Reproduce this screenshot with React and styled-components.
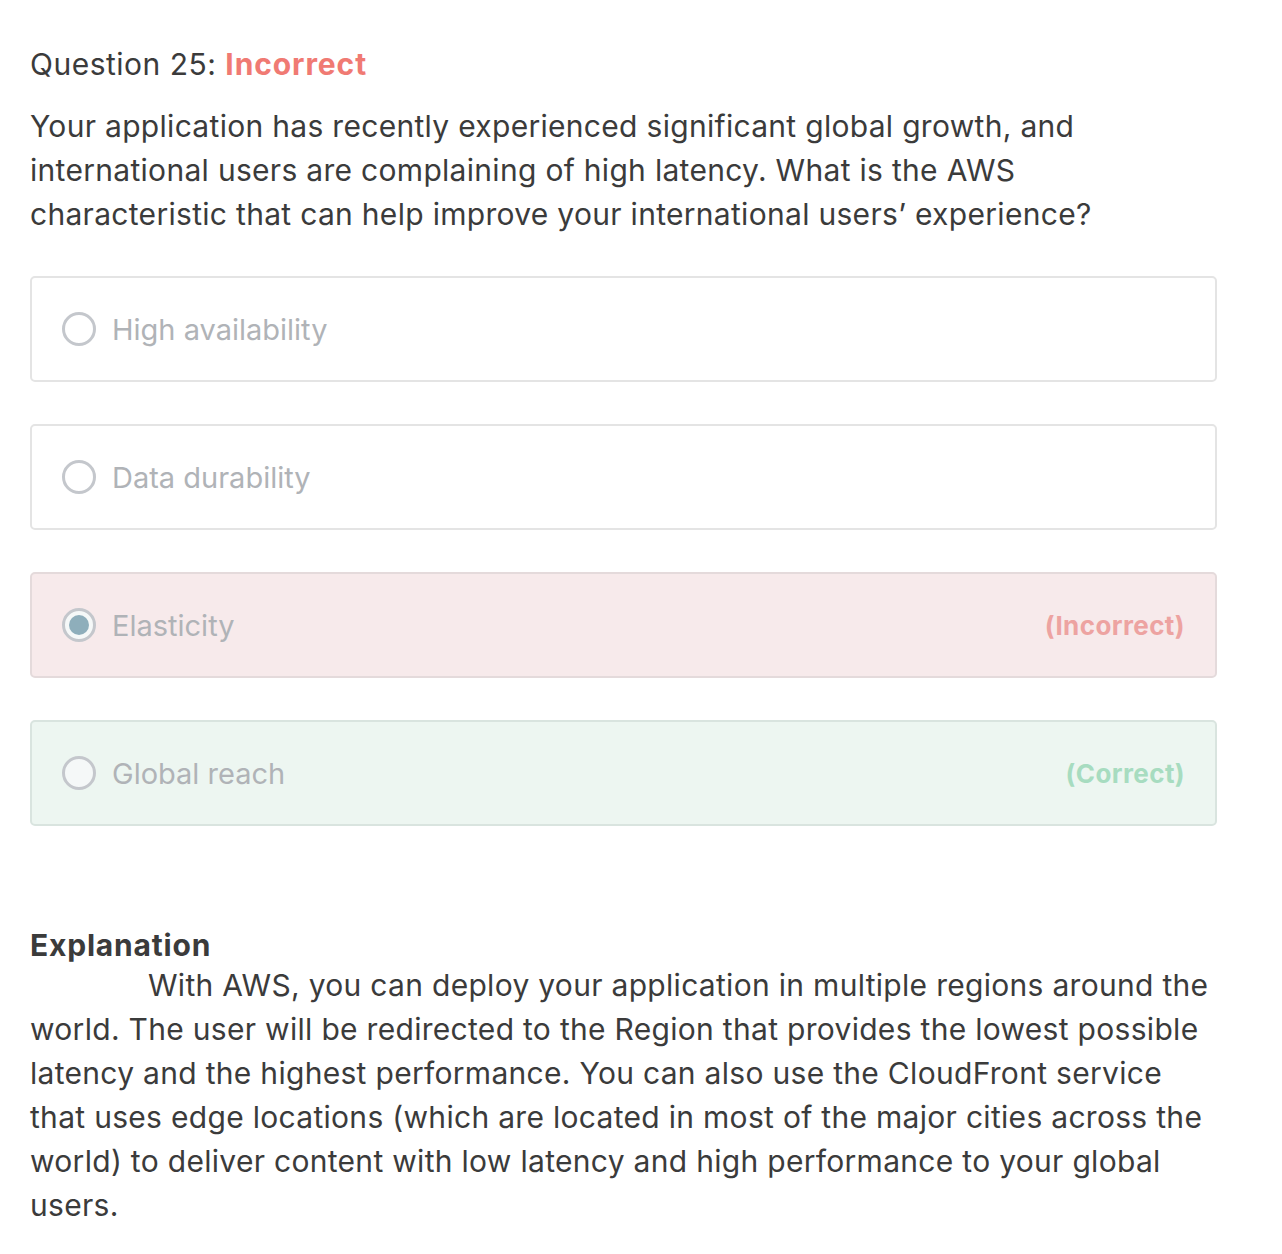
import styled, { createGlobalStyle } from "styled-components";

const GlobalStyle = createGlobalStyle`
  body {
    margin: 0;
    background: #ffffff;
    font-family: Inter, "Noto Sans", sans-serif;
    color: #3b3b3b;
  }
`;

const Page = styled.div`
  padding: 44px 30px 30px 30px;
  width: 1187px;
`;

const Heading = styled.div`
  font-size: 30px;
  line-height: 40px;
  letter-spacing: 0.5px;
  margin-bottom: 20px;
`;

const Status = styled.span`
  color: #f07a73;
  font-weight: 700;
  letter-spacing: 0.9px;
`;

const Prompt = styled.p`
  margin: 0 0 40px 0;
  font-size: 30px;
  line-height: 44px;
  letter-spacing: 0.3px;
`;

const Options = styled.div`
  display: flex;
  flex-direction: column;
  gap: 42px;
`;

const tones = {
  plain: { bg: "#ffffff", border: "#e4e4e4", label: "transparent" },
  wrong: { bg: "#f7eaeb", border: "#e4dadb", label: "#eda3a1" },
  right: { bg: "#edf6f1", border: "#d9e4df", label: "#a7dcc0" },
};

const Option = styled.div`
  display: flex;
  align-items: center;
  height: 106px;
  box-sizing: border-box;
  padding: 0 30px 0 30px;
  border: 2px solid ${(p) => tones[p.$tone].border};
  border-radius: 5px;
  background: ${(p) => tones[p.$tone].bg};
`;

const Radio = styled.span`
  width: 34px;
  height: 34px;
  box-sizing: border-box;
  border-radius: 50%;
  border: 3px solid #c4c7cc;
  background: ${(p) => (p.$tone === "plain" ? "#ffffff" : "#f5f8f8")};
  display: flex;
  align-items: center;
  justify-content: center;
  flex-shrink: 0;
  &::after {
    content: "";
    display: ${(p) => (p.$checked ? "block" : "none")};
    width: 20px;
    height: 20px;
    border-radius: 50%;
    background: #8eaebb;
  }
`;

const OptionText = styled.span`
  flex: 1;
  margin-left: 16px;
  font-size: 29px;
  color: #b0b3b7;
`;

const Verdict = styled.span`
  font-size: 26px;
  font-weight: 700;
  letter-spacing: 0.4px;
  color: ${(p) => tones[p.$tone].label};
`;

const Explanation = styled.div`
  margin-top: 101px;
  font-size: 30px;
  line-height: 44px;
  letter-spacing: 0.3px;
`;

const ExplTitle = styled.div`
  font-weight: 700;
  line-height: 36px;
  letter-spacing: 0.8px;
`;

const ExplBody = styled.p`
  margin: 0;
  text-indent: 118px;
`;

const options = [
  { text: "High availability", tone: "plain" },
  { text: "Data durability", tone: "plain" },
  { text: "Elasticity", tone: "wrong", checked: true, verdict: "(Incorrect)" },
  { text: "Global reach", tone: "right", verdict: "(Correct)" },
];

const App = () => {
  return (
    <Page>
      <GlobalStyle />
      <Heading>
        Question 25: <Status>Incorrect</Status>
      </Heading>
      <Prompt>
        Your application has recently experienced significant global growth, and
        international users are complaining of high latency. What is the AWS
        characteristic that can help improve your international users’ experience?
      </Prompt>
      <Options>
        {options.map((o) => (
          <Option key={o.text} $tone={o.tone}>
            <Radio $tone={o.tone} $checked={o.checked} />
            <OptionText>{o.text}</OptionText>
            {o.verdict && <Verdict $tone={o.tone}>{o.verdict}</Verdict>}
          </Option>
        ))}
      </Options>
      <Explanation>
        <ExplTitle>Explanation</ExplTitle>
        <ExplBody>
          With AWS, you can deploy your application in multiple regions around the
          world. The user will be redirected to the Region that provides the lowest
          possible latency and the highest performance. You can also use the
          CloudFront service that uses edge locations (which are located in most of
          the major cities across the world) to deliver content with low latency and
          high performance to your global users.
        </ExplBody>
      </Explanation>
    </Page>
  );
};

export default App;
